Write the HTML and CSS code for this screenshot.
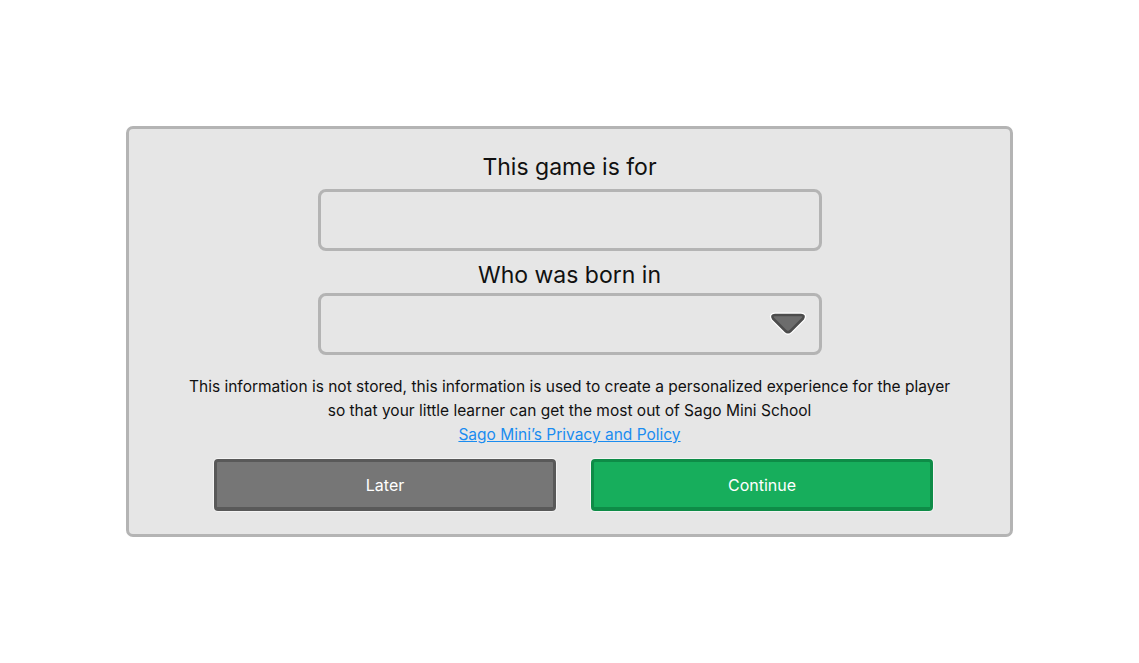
FILE: index.html
```html
<!DOCTYPE html>
<html lang="en">
<head>
  <meta charset="UTF-8">
  <meta name="viewport" content="width=device-width, initial-scale=1.0">
  <title>Player Info</title>
  <link rel="stylesheet" href="styles.css">
</head>
<body>

  <div class="card">
    <h2 class="label">This game is for</h2>
    <input type="text" class="field" id="playerName">

    <h2 class="label">Who was born in</h2>
    <div class="field select">
      <svg class="arrow" width="38" height="24" viewBox="0 0 38 24">
        <path d="M6 3 H32 Q36 3 34 6.5 L21.5 19 Q19 21.5 16.5 19 L4 6.5 Q2 3 6 3 Z"
              fill="#6c6c6c" stroke="#fff" stroke-width="5" stroke-linejoin="round"/>
        <path d="M6 3 H32 Q36 3 34 6.5 L21.5 19 Q19 21.5 16.5 19 L4 6.5 Q2 3 6 3 Z"
              fill="#6c6c6c" stroke="#4c4c4c" stroke-width="2.5" stroke-linejoin="round"/>
      </svg>
    </div>

    <p class="note">
      This information is not stored, this information is used to create a personalized experience for the player<br>
      so that your little learner can get the most out of Sago Mini School<br>
      <a href="#">Sago Mini’s Privacy and Policy</a>
    </p>

    <div class="buttons">
      <button class="btn later">Later</button>
      <button class="btn continue">Continue</button>
    </div>
  </div>

</body>
</html>
```

FILE: styles.css
```css
body {
  font-family: 'Inter', 'Noto Sans', sans-serif;
  background-color: #fff;
  margin: 0;
  padding: 0;
  min-height: 100vh;
  display: flex;
  justify-content: center;
  align-items: center;
}

.card {
  box-sizing: border-box;
  width: 887px;
  background-color: #e6e6e6;
  border: 3px solid #b4b4b4;
  border-radius: 7px;
  padding: 23px 0 23px;
  display: flex;
  flex-direction: column;
  align-items: center;
}

.label {
  margin: 0;
  font-size: 23px;
  font-weight: 400;
  line-height: 30px;
  color: #111;
}

.field {
  box-sizing: border-box;
  width: 504px;
  height: 62px;
  margin: 7px 0 9px;
  background-color: #e6e6e6;
  border: 3px solid #b4b4b4;
  border-radius: 8px;
  font-family: inherit;
  font-size: 20px;
  padding: 0 14px;
  outline: none;
}

.select {
  margin: 3px 0 20px;
  display: flex;
  align-items: center;
  justify-content: flex-end;
  padding-right: 12px;
}

.arrow {
  display: block;
}

.note {
  margin: 0;
  text-align: center;
  font-size: 15.5px;
  line-height: 24px;
  color: #111;
}

.note a {
  color: #1a8cf0;
  text-decoration: underline;
}

.buttons {
  display: flex;
  gap: 35px;
  margin-top: 12px;
  margin-left: 8px;
}

.btn {
  width: 342px;
  height: 52px;
  border-radius: 4px;
  font-family: inherit;
  font-size: 16px;
  color: #fff;
  cursor: pointer;
  border: 3px solid;
  border-bottom-width: 4px;
  box-shadow: 0 0 0 1px #f4f4f4;
}

.later {
  background-color: #767676;
  border-color: #595959;
}

.continue {
  background-color: #17ae5c;
  border-color: #0e8c47;
}
```
